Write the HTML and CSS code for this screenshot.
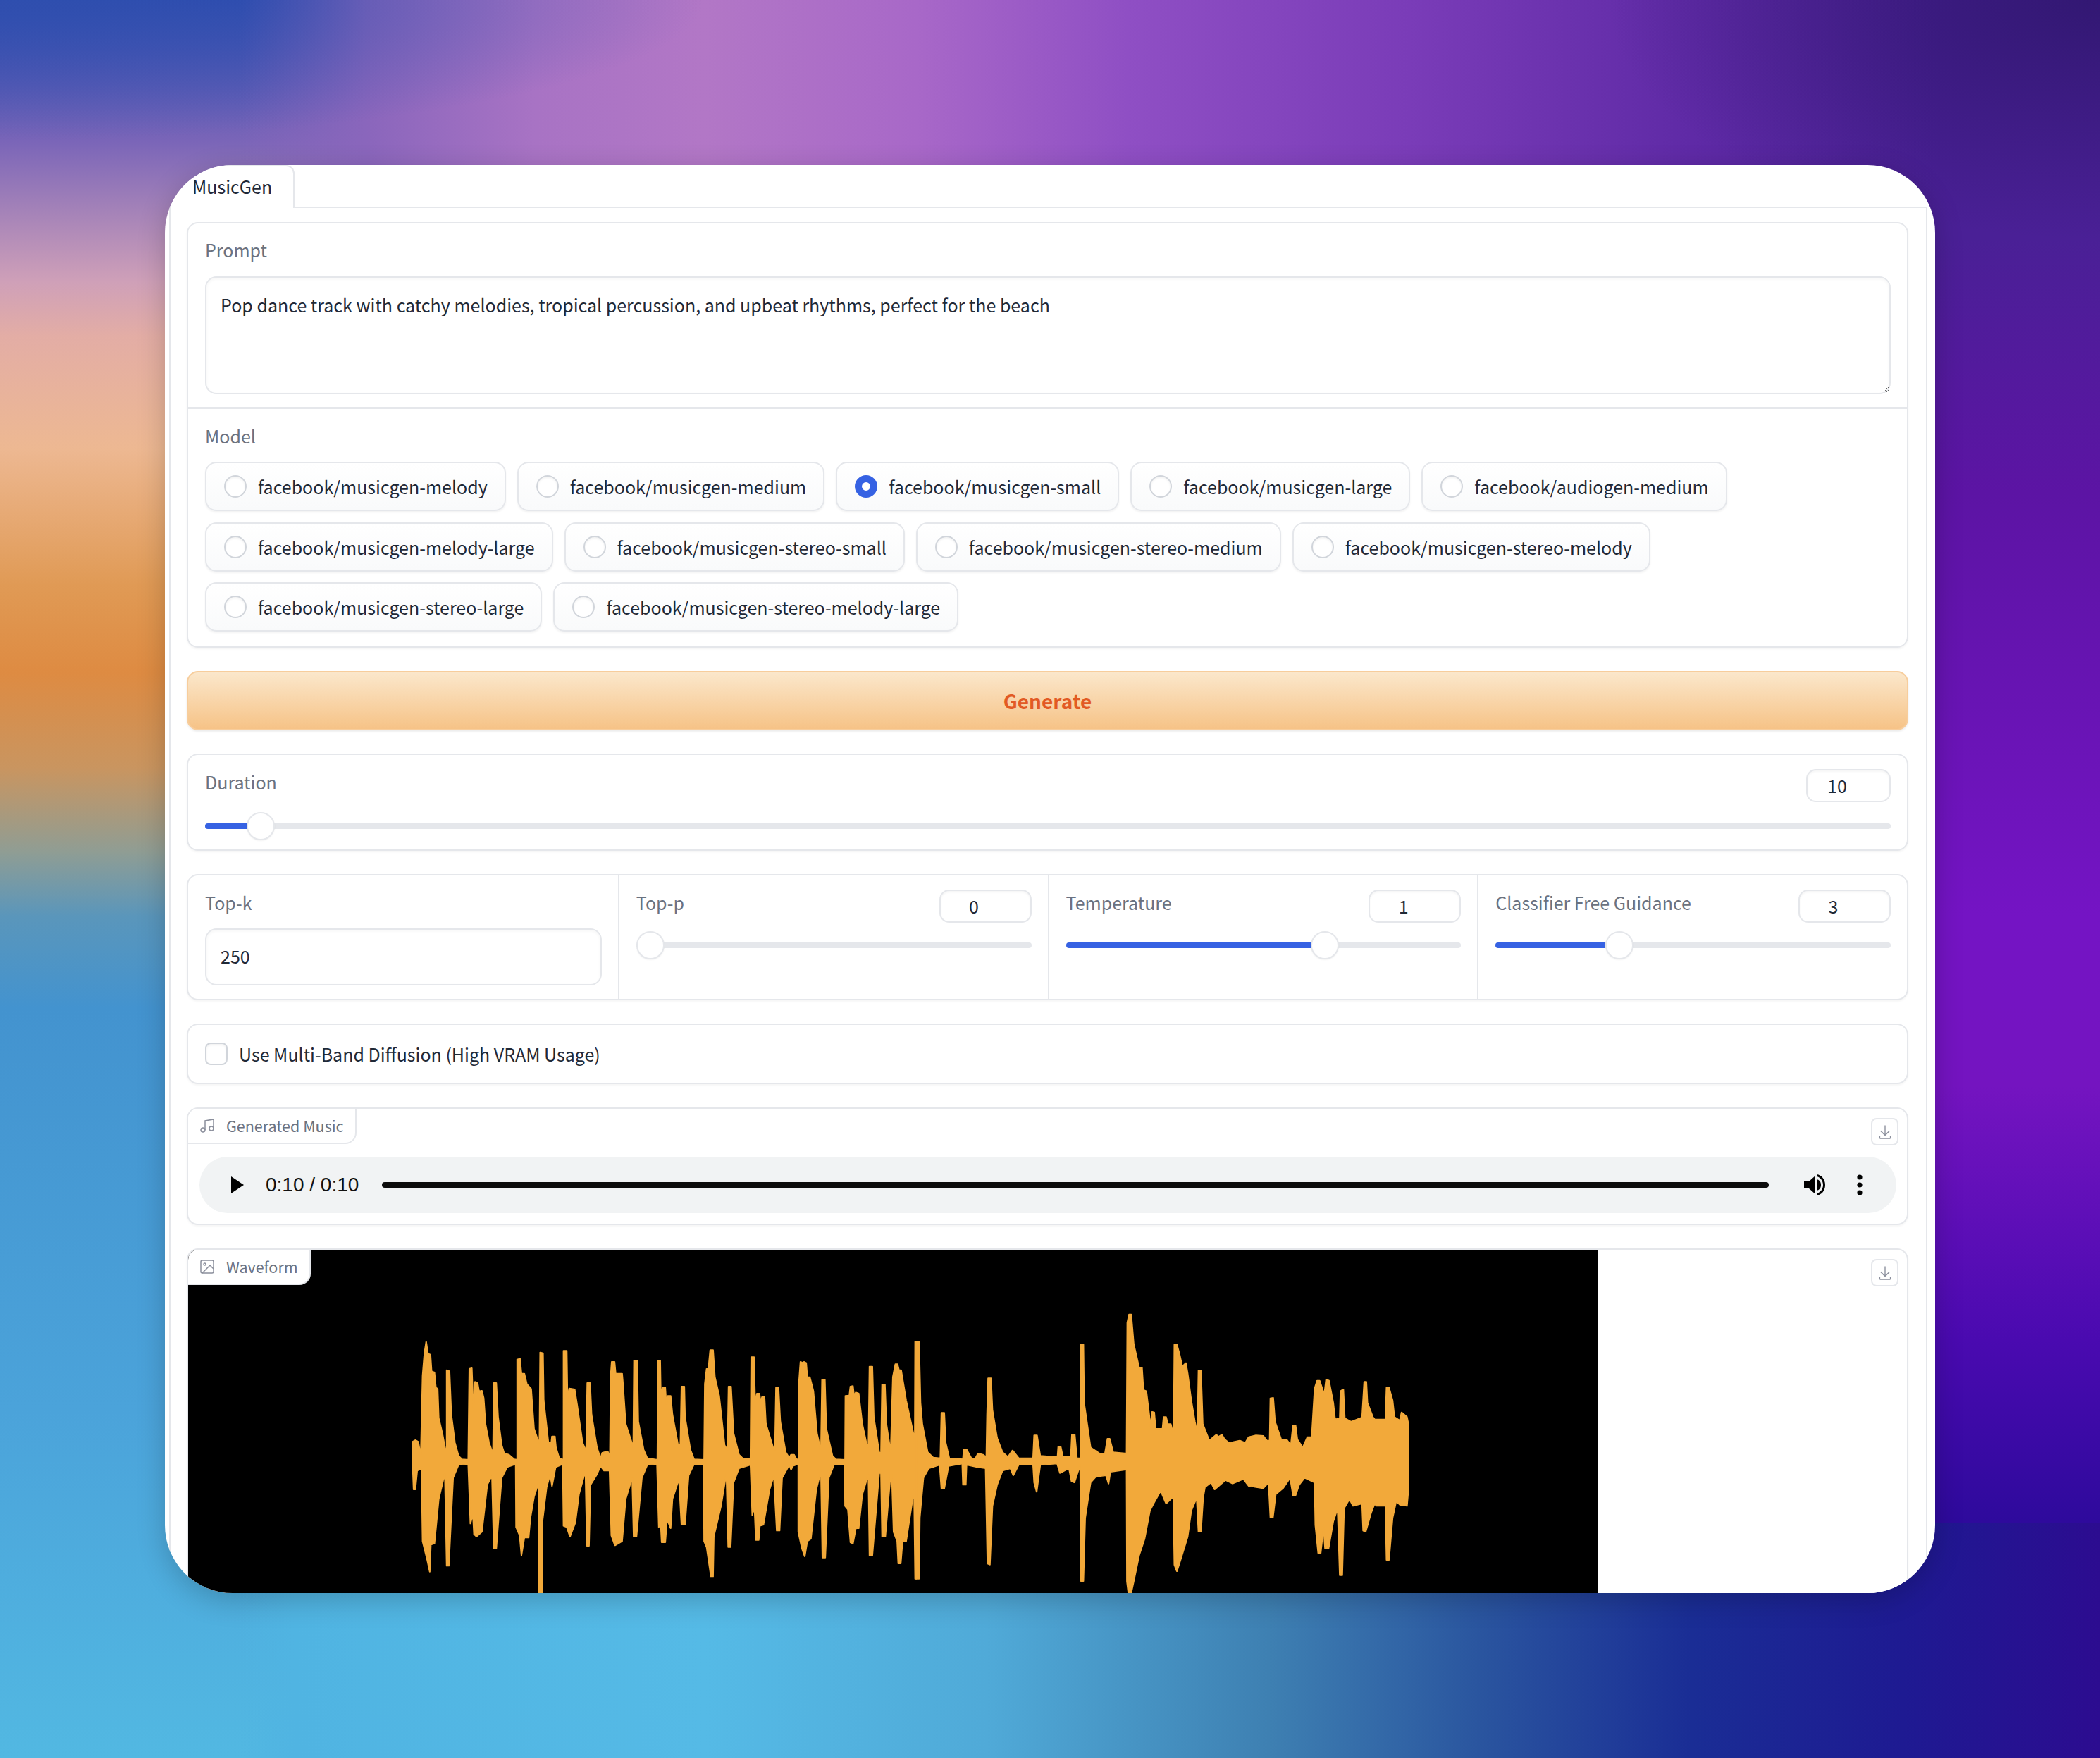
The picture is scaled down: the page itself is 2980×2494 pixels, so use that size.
FILE: index.html
```html
<!DOCTYPE html>
<html lang="en">
<head>
  <meta charset="UTF-8">
  <title>MusicGen</title>
  <link rel="stylesheet" href="styles.css">
</head>
<body>
  <div class="window">
    <!-- tabs -->
    <div class="tabs">
      <div class="tab">MusicGen</div>
    </div>

    <div class="content">
      <!-- prompt + model -->
      <div class="block">
        <div class="section prompt">
          <div class="label">Prompt</div>
          <textarea class="textbox">Pop dance track with catchy melodies, tropical percussion, and upbeat rhythms, perfect for the beach</textarea>
        </div>
        <div class="section model">
          <div class="label">Model</div>
          <div class="radios">
            <div class="pill"><span class="radio"></span>facebook/musicgen-melody</div>
            <div class="pill"><span class="radio"></span>facebook/musicgen-medium</div>
            <div class="pill selected"><span class="radio"></span>facebook/musicgen-small</div>
            <div class="pill"><span class="radio"></span>facebook/musicgen-large</div>
            <div class="pill"><span class="radio"></span>facebook/audiogen-medium</div>
            <div class="pill"><span class="radio"></span>facebook/musicgen-melody-large</div>
            <div class="pill"><span class="radio"></span>facebook/musicgen-stereo-small</div>
            <div class="pill"><span class="radio"></span>facebook/musicgen-stereo-medium</div>
            <div class="pill"><span class="radio"></span>facebook/musicgen-stereo-melody</div>
            <div class="pill"><span class="radio"></span>facebook/musicgen-stereo-large</div>
            <div class="pill"><span class="radio"></span>facebook/musicgen-stereo-melody-large</div>
          </div>
        </div>
      </div>

      <button class="generate">Generate</button>

      <!-- duration -->
      <div class="block duration">
        <div class="slider-head">
          <div class="label">Duration</div>
          <div class="number">10</div>
        </div>
        <div class="track">
          <div class="fill" style="width: 59px"></div>
          <div class="thumb" style="left: 59px"></div>
        </div>
      </div>

      <!-- sampling params -->
      <div class="block params">
        <div class="param">
          <div class="label">Top-k</div>
          <div class="textinput">250</div>
        </div>
        <div class="param">
          <div class="slider-head">
            <div class="label">Top-p</div>
            <div class="number">0</div>
          </div>
          <div class="track">
            <div class="thumb" style="left: 0"></div>
          </div>
        </div>
        <div class="param">
          <div class="slider-head">
            <div class="label">Temperature</div>
            <div class="number">1</div>
          </div>
          <div class="track">
            <div class="fill" style="width: 347px"></div>
            <div class="thumb" style="left: 347px"></div>
          </div>
        </div>
        <div class="param">
          <div class="slider-head">
            <div class="label">Classifier Free Guidance</div>
            <div class="number">3</div>
          </div>
          <div class="track">
            <div class="fill" style="width: 156px"></div>
            <div class="thumb" style="left: 156px"></div>
          </div>
        </div>
      </div>

      <div class="block check-row">
        <span class="checkbox"></span>
        Use Multi-Band Diffusion (High VRAM Usage)
      </div>

      <!-- audio output -->
      <div class="block audio">
        <div class="badge">
          <svg class="badge-icon" viewBox="0 0 24 24"><path d="M9 18V5l12-2v13"/><circle cx="6" cy="18" r="3"/><circle cx="18" cy="16" r="3"/></svg>
          Generated Music
        </div>
        <button class="download">
          <svg viewBox="0 0 32 32"><path d="M26 24v4H6v-4H4v4a2 2 0 0 0 2 2h20a2 2 0 0 0 2-2v-4zm0-10l-1.41-1.41L17 20.17V2h-2v18.17l-7.59-7.58L6 14l10 10l10-10z"/></svg>
        </button>
        <div class="player">
          <svg class="play" viewBox="0 0 18 24"><path d="M0 0L18 12L0 24z"/></svg>
          <span class="time">0:10 / 0:10</span>
          <div class="progress"></div>
          <svg class="volume" viewBox="0 0 30 30"><path d="M0 10h7l9-8v26l-9-8H0z"/><path d="M18 7c4 1 6 4 6 8s-2 7-6 8z"/><path d="M18 0c7 1 12 7 12 15s-5 14-12 15v-3c5-1 9-6 9-12S23 4 18 3z"/></svg>
          <svg class="dots" viewBox="0 0 8 30"><circle cx="4" cy="4" r="3.6"/><circle cx="4" cy="15" r="3.6"/><circle cx="4" cy="26" r="3.6"/></svg>
        </div>
      </div>

      <!-- waveform output -->
      <div class="block waveform">
        <div class="badge">
          <svg class="badge-icon" viewBox="0 0 24 24"><rect x="3" y="3" width="18" height="18" rx="2" ry="2"/><circle cx="8.5" cy="8.5" r="1.5"/><polyline points="21 15 16 10 5 21"/></svg>
          Waveform
        </div>
        <button class="download">
          <svg viewBox="0 0 32 32"><path d="M26 24v4H6v-4H4v4a2 2 0 0 0 2 2h20a2 2 0 0 0 2-2v-4zm0-10l-1.41-1.41L17 20.17V2h-2v18.17l-7.59-7.58L6 14l10 10l10-10z"/></svg>
        </button>
        <svg class="wave" viewBox="-457 -141 3920 1461" preserveAspectRatio="none">
          <path d="M167 760 167 675 175 668 183 675 190 735 195 395 200 300 205 250 210 300 217 305 220 375 228 380 232 445 237 450 240 575 250 640 258 705 262 705 262 370 270 375 275 560 285 680 295 735 305 750 322 752 325 365 332 362 336 530 341 420 348 425 352 460 360 458 365 490 370 600 380 680 388 715 391 715 393 425 400 425 405 570 415 690 422 725 435 730 450 750 458 752 458 325 466 322 470 385 478 385 485 430 497 450 505 620 515 665 520 680 522 295 530 298 532 500 545 680 553 680 555 652 563 652 566 700 575 745 587 752 587 288 596 288 598 490 603 448 618 452 625 520 640 680 650 715 653 425 661 425 665 560 680 700 690 745 695 722 710 716 716 745 718 400 721 335 729 335 732 385 750 385 752 420 760 600 775 670 781 700 783 330 792 330 795 590 810 710 820 745 848 752 850 330 856 330 858 510 862 445 870 445 873 515 877 480 885 480 890 560 905 685 912 690 915 440 923 440 925 570 940 710 950 750 978 752 980 430 985 365 990 365 995 285 1003 285 1008 400 1020 480 1035 690 1043 710 1046 440 1053 440 1060 640 1075 730 1085 745 1107 748 1109 315 1117 315 1120 510 1125 470 1132 470 1135 505 1140 482 1146 482 1150 600 1170 700 1175 710 1178 445 1185 445 1190 590 1205 720 1215 745 1220 730 1228 730 1235 750 1242 750 1242 420 1246 335 1253 340 1256 335 1262 340 1265 400 1272 400 1282 460 1292 640 1303 715 1306 412 1314 412 1318 620 1335 735 1345 750 1370 752 1371 480 1382 478 1385 440 1392 438 1395 480 1400 465 1408 470 1418 600 1430 685 1435 700 1438 355 1446 355 1450 570 1465 720 1470 725 1473 432 1481 432 1485 600 1497 720 1503 400 1510 345 1516 345 1520 370 1526 370 1540 500 1560 640 1564 665 1565 250 1568 250 1568 1260 1565 1260 1562 880 1550 1000 1540 1100 1530 1100 1525 1195 1518 1195 1515 1100 1505 1060 1500 810 1497 810 1482 1080 1473 1080 1470 810 1465 810 1446 1160 1438 1160 1435 815 1418 900 1408 1045 1400 1045 1392 1110 1385 1105 1378 965 1370 950 1369 772 1340 772 1325 830 1315 1170 1307 1170 1303 800 1290 880 1275 1090 1265 1100 1258 1165 1250 1130 1240 1060 1240 772 1225 780 1220 795 1215 775 1195 830 1188 1055 1180 1055 1172 820 1160 880 1143 1030 1133 1035 1130 1095 1122 1095 1118 950 1112 990 1107 775 1075 790 1060 850 1052 1125 1045 1125 1040 810 1025 950 1005 1080 1003 1250 997 1250 985 1125 978 1100 977 772 950 772 935 820 925 1030 915 1030 908 835 890 920 885 1045 875 1005 870 1105 860 1105 856 985 852 1040 847 772 820 775 805 830 790 1080 782 1080 778 830 760 920 750 1100 730 1118 720 1075 715 800 700 800 690 780 680 815 662 860 658 1120 652 1120 648 800 630 900 620 1020 605 1080 596 1040 587 1035 585 772 565 785 555 865 550 815 540 870 528 1020 528 1320 519 1320 518 850 505 910 495 1000 490 1085 478 1085 470 1160 465 1075 455 1040 454 772 430 785 415 830 400 1130 393 1130 388 820 375 860 360 1060 345 1080 338 1070 335 985 328 1025 322 772 295 775 280 830 268 1205 262 1205 257 810 240 920 228 1110 218 1115 215 1230 208 1180 195 1100 192 790 180 800 175 880 170 880z"/>
          <path transform="translate(1568)" d="M0 250 8 250 12 510 17 600 32 720 47 742 67 745 70 552 78 552 82 680 92 745 130 750 132 708 140 708 155 750 165 745 172 725 185 730 195 740 197 560 200 405 208 405 212 540 225 660 240 720 255 740 268 712 285 745 325 745 328 648 336 648 345 735 370 738 393 740 395 697 402 697 408 740 430 740 433 645 441 645 447 745 457 745 458 262 465 262 467 510 485 700 510 725 525 725 532 662 538 662 548 720 585 725 587 170 592 133 598 133 605 260 620 360 628 360 632 455 640 460 652 610 656 548 662 550 666 620 685 620 688 570 695 570 700 600 708 600 716 648 718 262 725 262 732 300 740 355 750 340 755 385 765 500 775 590 782 640 785 372 792 372 797 600 815 670 835 645 840 655 850 645 858 665 870 680 900 670 915 680 925 655 945 648 965 650 975 670 983 670 985 490 993 488 998 590 1015 665 1030 665 1042 690 1048 605 1055 605 1060 665 1075 700 1088 655 1100 655 1108 450 1115 415 1122 415 1135 475 1140 410 1148 415 1160 510 1165 580 1178 575 1180 460 1188 452 1192 575 1210 590 1240 572 1246 420 1252 420 1255 510 1270 570 1275 580 1305 580 1308 445 1315 445 1325 500 1330 570 1345 585 1350 550 1365 570 1369 600 1369 880 1365 950 1345 945 1335 930 1325 1000 1315 1180 1308 1180 1305 950 1280 950 1275 940 1265 980 1250 1060 1243 1055 1240 940 1215 950 1205 920 1190 960 1185 1245 1178 1245 1172 960 1160 1015 1147 1130 1137 1130 1133 1040 1125 1150 1118 1150 1110 1030 1108 850 1080 830 1065 860 1055 905 1048 905 1040 830 1020 875 1000 900 992 1000 985 1000 980 850 965 875 925 865 910 835 880 855 860 840 830 880 820 850 803 870 798 915 792 1060 785 1060 780 915 765 970 755 1080 735 1180 725 1228 718 1200 715 910 695 940 680 885 660 940 650 970 635 1090 620 1160 605 1270 598 1320 590 1320 586 1270 585 795 540 805 535 855 528 820 500 825 485 850 470 1000 465 1270 458 1270 456 775 440 850 432 845 425 790 400 810 392 770 345 775 335 890 328 850 325 775 285 775 270 820 262 790 240 800 225 860 212 950 205 1200 198 1195 193 790 170 785 140 775 138 860 130 860 128 770 90 780 78 875 70 875 65 775 35 790 20 830 10 1000 8 1260 0 1260z"/>
        </svg>
      </div>
    </div>
  </div>
</body>
</html>
```

FILE: styles.css
```css
* {
  margin: 0;
  padding: 0;
  box-sizing: border-box;
}

body {
  width: 2980px;
  height: 2494px;
  padding: 234px;
  overflow: hidden;
  font-family: "Noto Sans CJK SC", "Noto Sans", sans-serif;
  font-size: 25px;
  line-height: 40px;
  color: #1f2937;
  /* the window hides the middle, so each margin gets its own strip */
  background:
    radial-gradient(ellipse 700px 340px at 2980px 0, rgba(40, 20, 100, 0.7), rgba(40, 20, 100, 0)),
    radial-gradient(ellipse 1000px 200px at 0 0, rgba(47, 79, 174, 0.8), rgba(47, 79, 174, 0)),
    linear-gradient(90deg, rgba(138, 102, 188, 0) 340px, #8a66bc 520px, #a873c4 760px, #b277c6 1000px, #a868c8 1300px, #8f4fc4 1600px, #7a3cb8 2000px, #5f2aa6 2400px, #4a2096 2746px) 0 0 / 100% 340px no-repeat,
    linear-gradient(180deg, #4a2096 0, #5c14a4 360px, #7414c4 960px, #7414c0 1200px, #4a0ab0 1560px, #2e0a9c 1820px) 2640px 340px / 340px 1820px no-repeat,
    linear-gradient(90deg, rgba(80, 180, 226, 0) 340px, #50b4e2 420px, #55bae6 1000px, #50aad8 1400px, #3e80b2 1800px, #2a559f 2100px, #1a2d95 2400px, #1e1a92 2700px, #2c0c90 2980px) 0 2160px / 100% 334px no-repeat,
    linear-gradient(180deg, #2e4cb0 0, #7a65b8 200px, #cfa0b8 400px, #e3ada5 477px, #edb892 636px, #e09a55 830px, #de8b42 954px, #c99560 1090px, #8f9d94 1209px, #5a96bb 1300px, #4393cf 1430px, #4ba3da 2000px, #52b8e2 2494px);
}

.window {
  width: 2512px;
  height: 2026px;
  padding: 0 11px 0 6px;
  background: #fff;
  border-radius: 96px;
  overflow: hidden;
  box-shadow: 0 10px 40px rgba(0, 0, 0, 0.2);
}

/* tabs */
.tabs {
  display: flex;
  height: 61px;
  border-bottom: 2px solid #e5e7eb;
}

.tab {
  width: 178px;
  height: 61px;
  padding: 8px 0 0 31px;
  background: #fff;
  border: 2px solid #e5e7eb;
  border-bottom: 0;
  border-radius: 12px 12px 0 0;
}

.content {
  display: flex;
  flex-direction: column;
  gap: 33px;
  padding: 20px 25px 0 23px;
  border-left: 2px solid #e5e7eb;
  border-right: 2px solid #e5e7eb;
  height: 1965px;
  overflow: hidden;
}

/* blocks */
.block {
  position: relative;
  flex-shrink: 0;
  background: #fff;
  border: 2px solid #e5e7eb;
  border-radius: 16px;
  box-shadow: 0 2px 3px rgba(0, 0, 0, 0.04);
}

.label {
  color: #6b7280;
}

.section {
  padding: 17px 23px 0 24px;
}

.prompt {
  height: 263px;
  border-bottom: 2px solid #e5e7eb;
}

.textbox {
  display: block;
  width: 100%;
  height: 167px;
  margin-top: 18px;
  padding: 18px 20px;
  font: inherit;
  color: inherit;
  border: 2px solid #e5e7eb;
  border-radius: 16px;
  outline: none;
  box-shadow: inset 0 2px 4px rgba(0, 0, 0, 0.04);
}

.model {
  padding-top: 18px;
  padding-bottom: 21px;
}

.radios {
  display: flex;
  flex-wrap: wrap;
  gap: 15.5px 16px;
  margin-top: 17px;
}

.pill {
  display: flex;
  align-items: center;
  gap: 16px;
  height: 70px;
  padding: 0 24px 0 25px;
  background: linear-gradient(to bottom, #fff, #f9fafb);
  border: 2px solid #e5e7eb;
  border-radius: 16px;
  box-shadow: 0 2px 3px rgba(0, 0, 0, 0.05);
}

.radio {
  width: 32px;
  height: 32px;
  background: #fff;
  border: 2px solid #d1d5db;
  border-radius: 50%;
  box-shadow: inset 0 2px 3px rgba(0, 0, 0, 0.05);
}

.selected .radio {
  background: #fff;
  border: 10px solid #3662e3;
  box-shadow: none;
}

.generate {
  flex-shrink: 0;
  height: 84px;
  font: inherit;
  font-size: 28px;
  font-weight: 700;
  color: #e25a24;
  background: linear-gradient(to bottom, #fbe7cb, #f6c387);
  border: 2px solid #f7cd9c;
  border-radius: 16px;
  box-shadow: 0 2px 3px rgba(0, 0, 0, 0.08);
}

/* sliders */
.duration {
  height: 138px;
  padding: 20px 23px 0 24px;
}

.slider-head {
  display: flex;
  justify-content: space-between;
}

.slider-head .label {
  margin-top: -2px;
}

.number {
  width: 120px;
  height: 47px;
  padding-right: 32px;
  line-height: 43px;
  text-align: center;
  border: 2px solid #e5e7eb;
  border-radius: 14px;
  box-shadow: inset 0 2px 3px rgba(0, 0, 0, 0.04);
}

.track {
  position: relative;
  height: 8px;
  margin-top: 30px;
  background: #e5e7eb;
  border-radius: 4px;
}

.fill {
  height: 100%;
  background: #3662e3;
  border-radius: 4px 0 0 4px;
}

/* sits over the track */
.thumb {
  position: absolute;
  top: -16px;
  width: 40px;
  height: 40px;
  background: #fff;
  border: 2px solid #e5e7eb;
  border-radius: 50%;
  box-shadow: 0 1px 2px rgba(0, 0, 0, 0.05);
}

.params {
  display: grid;
  grid-template-columns: repeat(4, 1fr);
  height: 179px;
}

.param {
  padding: 20px 23px 0 24px;
  border-left: 2px solid #e5e7eb;
}

.param:first-child {
  border-left: 0;
}

.param > .label {
  margin-top: -2px;
}

.param .number {
  width: 131px;
}

.param .track {
  margin-top: 28px;
}

.textinput {
  height: 81px;
  margin-top: 17px;
  padding: 0 20px;
  line-height: 75px;
  border: 2px solid #e5e7eb;
  border-radius: 16px;
  box-shadow: inset 0 2px 4px rgba(0, 0, 0, 0.04);
}

.check-row {
  display: flex;
  align-items: center;
  gap: 16px;
  height: 86px;
  padding: 0 24px;
}

.checkbox {
  width: 32px;
  height: 32px;
  border: 2px solid #d1d5db;
  border-radius: 8px;
  box-shadow: inset 0 2px 3px rgba(0, 0, 0, 0.05);
}

/* audio */
.audio {
  height: 167px;
  padding: 68px 15px 0 16px;
}

.badge {
  position: absolute;
  top: 0;
  left: 0;
  display: flex;
  align-items: center;
  gap: 15px;
  height: 50px;
  padding: 0 16px 0 15px;
  font-size: 21.5px;
  line-height: 32px;
  color: #6b7280;
  background: #fff;
  border-right: 2px solid #e5e7eb;
  border-bottom: 2px solid #e5e7eb;
  border-radius: 14px 0 16px 0;
  z-index: 1;
}

.badge-icon {
  width: 24px;
  height: 24px;
  fill: none;
  stroke: #8b8f9c;
  stroke-width: 1.5;
}

.download {
  position: absolute;
  top: 13px;
  right: 12px;
  width: 39px;
  height: 39px;
  display: flex;
  align-items: center;
  justify-content: center;
  background: #fff;
  border: 2px solid #e5e7eb;
  border-radius: 8px;
  z-index: 1;
}

.download svg {
  width: 22px;
  height: 22px;
  fill: #8b8f9c;
}

.player {
  display: flex;
  align-items: center;
  height: 80px;
  padding-left: 45px;
  background: #f1f3f4;
  border-radius: 40px;
}

.play {
  width: 18px;
  height: 24px;
  fill: #000;
}

.time {
  margin-left: 31px;
  font-family: "Liberation Sans", Arial, sans-serif;
  font-size: 28px;
  color: #111;
}

.progress {
  width: 1968px;
  height: 8px;
  margin-left: 33px;
  background: #0c0c0c;
  border-radius: 4px;
}

.volume {
  width: 30px;
  height: 30px;
  margin-left: 50px;
}

.dots {
  width: 8px;
  height: 30px;
  margin-left: 45px;
}

/* waveform */
.waveform {
  height: 530px;
  overflow: hidden;
  border-bottom: 0;
  border-radius: 16px 16px 0 0;
}

.wave {
  display: block;
  width: 2000px;
  height: 487px;
  background: #000;
  fill: #f2a93a;
  stroke: #f2a93a;
  stroke-width: 4;
  stroke-linejoin: round;
}
```
